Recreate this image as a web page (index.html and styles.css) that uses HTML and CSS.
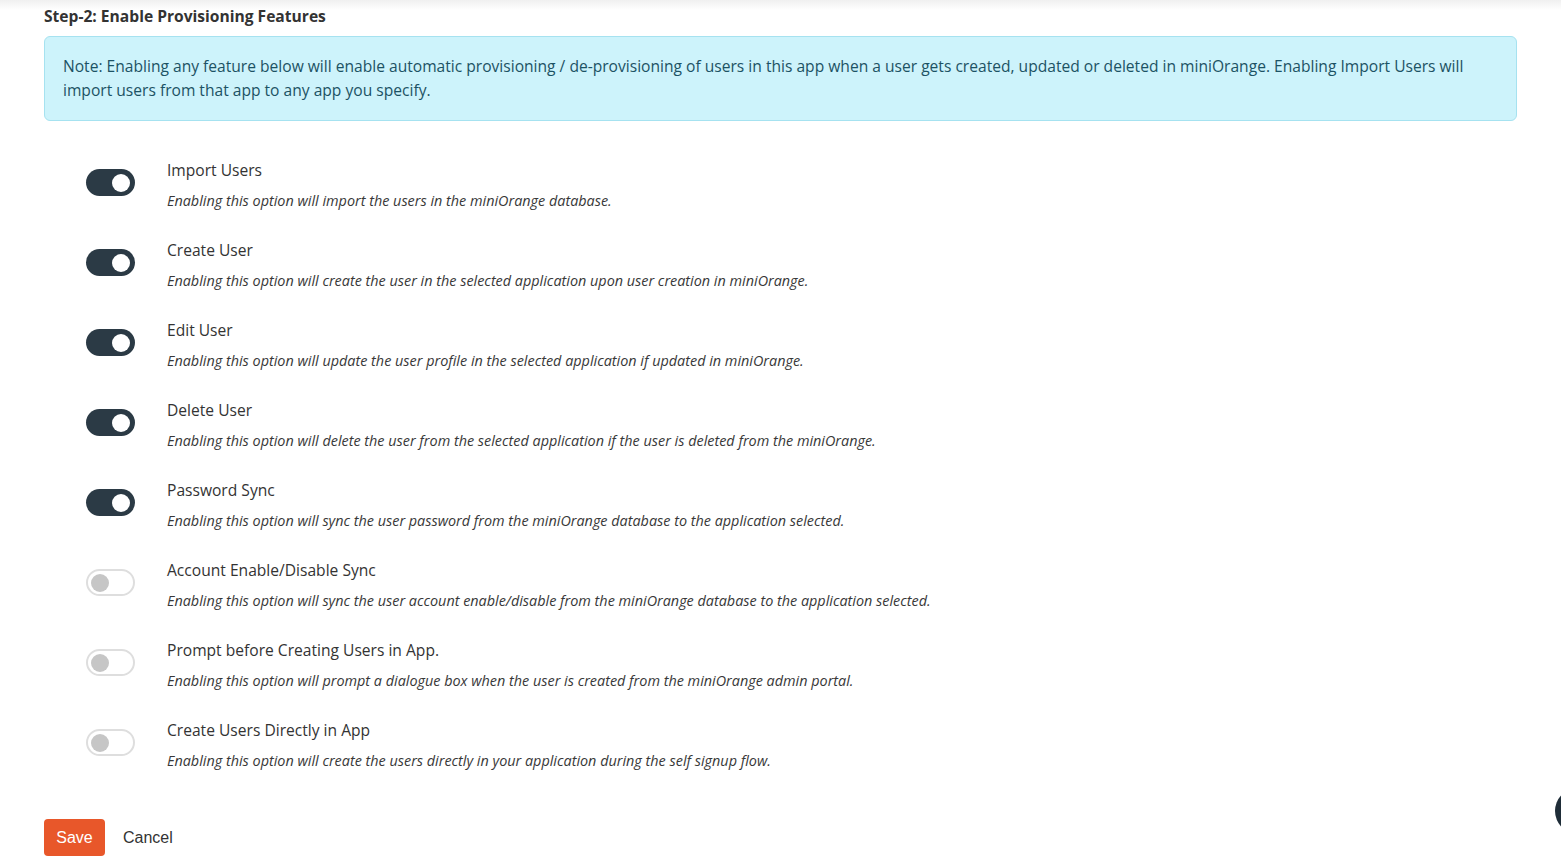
FILE: index.html
```html
<!DOCTYPE html>
<html>
<head>
<meta charset="utf-8">
<link rel="stylesheet" href="styles.css">
</head>
<body>
<div class="topshade"></div>
<main class="page">
  <h2 class="step-title">Step-2: Enable Provisioning Features</h2>
  <div class="note">Note: Enabling any feature below will enable automatic provisioning / de-provisioning of users in this app when a user gets created, updated or deleted in miniOrange. Enabling Import Users will import users from that app to any app you specify.</div>

  <ul class="features">
    <li class="feature">
      <span class="toggle on"><span class="knob"></span></span>
      <div class="text">
        <div class="name">Import Users</div>
        <div class="desc">Enabling this option will import the users in the miniOrange database.</div>
      </div>
    </li>
    <li class="feature">
      <span class="toggle on"><span class="knob"></span></span>
      <div class="text">
        <div class="name">Create User</div>
        <div class="desc">Enabling this option will create the user in the selected application upon user creation in miniOrange.</div>
      </div>
    </li>
    <li class="feature">
      <span class="toggle on"><span class="knob"></span></span>
      <div class="text">
        <div class="name">Edit User</div>
        <div class="desc">Enabling this option will update the user profile in the selected application if updated in miniOrange.</div>
      </div>
    </li>
    <li class="feature">
      <span class="toggle on"><span class="knob"></span></span>
      <div class="text">
        <div class="name">Delete User</div>
        <div class="desc">Enabling this option will delete the user from the selected application if the user is deleted from the miniOrange.</div>
      </div>
    </li>
    <li class="feature">
      <span class="toggle on"><span class="knob"></span></span>
      <div class="text">
        <div class="name">Password Sync</div>
        <div class="desc">Enabling this option will sync the user password from the miniOrange database to the application selected.</div>
      </div>
    </li>
    <li class="feature">
      <span class="toggle off"><span class="knob"></span></span>
      <div class="text">
        <div class="name">Account Enable/Disable Sync</div>
        <div class="desc">Enabling this option will sync the user account enable/disable from the miniOrange database to the application selected.</div>
      </div>
    </li>
    <li class="feature">
      <span class="toggle off"><span class="knob"></span></span>
      <div class="text">
        <div class="name">Prompt before Creating Users in App.</div>
        <div class="desc">Enabling this option will prompt a dialogue box when the user is created from the miniOrange admin portal.</div>
      </div>
    </li>
    <li class="feature">
      <span class="toggle off"><span class="knob"></span></span>
      <div class="text">
        <div class="name">Create Users Directly in App</div>
        <div class="desc">Enabling this option will create the users directly in your application during the self signup flow.</div>
      </div>
    </li>
  </ul>

  <div class="actions">
    <button class="btn-save">Save</button>
    <button class="btn-cancel">Cancel</button>
  </div>
</main>
<div class="chat-bubble"></div>
</body>
</html>
```
FILE: styles.css
```css
html, body {
  margin: 0;
  padding: 0;
  background: #ffffff;
  overflow: hidden;
}
body {
  font-family: "Open Sans", "Liberation Sans", sans-serif;
  color: #333333;
  height: 865px;
  position: relative;
}
.topshade {
  height: 10px;
  background: linear-gradient(#f0f0f0, #ffffff);
  position: absolute;
  left: 0;
  right: 0;
  top: 0;
}
.page {
  padding: 6px 44px 0 44px;
  position: relative;
}
.step-title {
  margin: 0;
  font-size: 15.6px;
  line-height: 21px;
  font-weight: 700;
  color: #333;
}
.note {
  margin-top: 9px;
  background: #cdf3fb;
  border: 1px solid #a6e2f0;
  border-radius: 6px;
  padding: 17px 18px 18px 18px;
  font-size: 15.6px;
  line-height: 24px;
  color: #1c5264;
}
.features {
  list-style: none;
  margin: 38px 0 0 0;
  padding: 0;
}
.feature {
  display: flex;
  height: 80px;
  padding-left: 42px;
}
.toggle {
  flex: none;
  width: 49px;
  height: 27px;
  border-radius: 14px;
  box-sizing: border-box;
  margin-top: 10px;
  margin-right: 32px;
  display: flex;
  align-items: center;
}
.toggle.on {
  background: #2b3a45;
  justify-content: flex-end;
  padding-right: 5px;
}
.toggle.on .knob {
  background: #ffffff;
}
.toggle.off {
  background: #ffffff;
  border: 2px solid #dedede;
  padding-left: 3px;
}
.toggle.off .knob {
  background: #c6c6c6;
}
.knob {
  width: 18px;
  height: 18px;
  border-radius: 50%;
}
.name {
  font-size: 15.6px;
  line-height: 22px;
  color: #333;
}
.desc {
  margin-top: 10px;
  font-size: 14.4px;
  line-height: 20px;
  font-style: italic;
  color: #383838;
}
.actions {
  margin-top: 20px;
  display: flex;
  align-items: center;
}
.btn-save {
  width: 61px;
  height: 37px;
  border: none;
  border-radius: 4px;
  background: #e8572a;
  color: #fff;
  font-family: "Liberation Sans", Arial, sans-serif;
  font-size: 16px;
  padding: 0;
}
.btn-cancel {
  margin-left: 18px;
  border: none;
  background: none;
  padding: 0;
  font-family: "Liberation Sans", Arial, sans-serif;
  font-size: 16px;
  color: #333;
}
.chat-bubble {
  position: absolute;
  left: 1555px;
  top: 788px;
  width: 46px;
  height: 46px;
  border-radius: 50%;
  background: #1f2d38;
}
```
